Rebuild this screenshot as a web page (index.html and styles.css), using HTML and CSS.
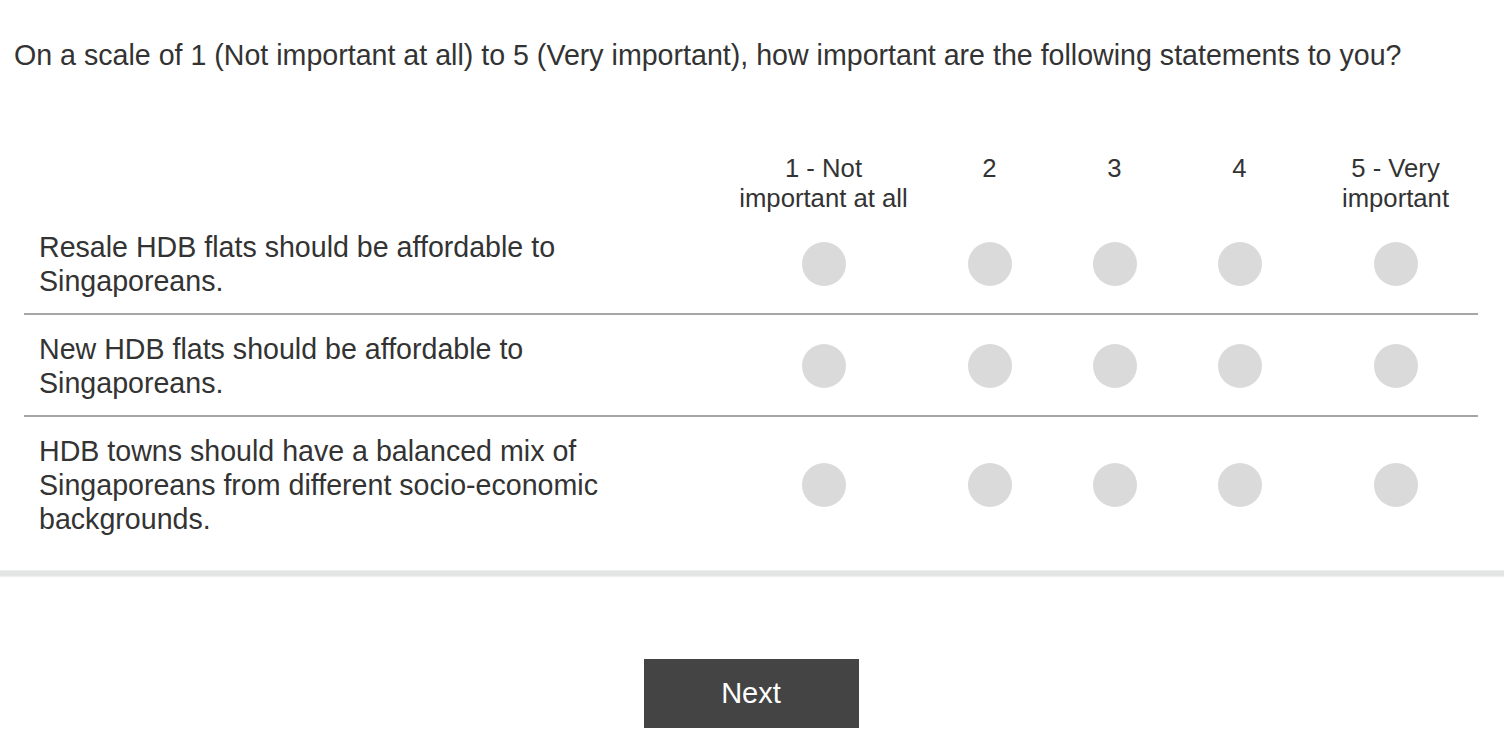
FILE: index.html
```html
<!DOCTYPE html>
<html>
<head>
<meta charset="utf-8">
<link rel="stylesheet" href="styles.css">
</head>
<body>
<div class="page">
  <div class="question">On a scale of 1 (Not important at all) to 5 (Very important), how important are the following statements to you?</div>
  <div class="matrix">
    <div class="row header">
      <div class="stmt"></div>
      <div class="col c1">1 - Not<br>important at all</div>
      <div class="col c2">2</div>
      <div class="col c3">3</div>
      <div class="col c4">4</div>
      <div class="col c5">5 - Very<br>important</div>
    </div>
    <div class="row item first sep">
      <div class="stmt">Resale HDB flats should be affordable to<br>Singaporeans.</div>
      <div class="col"><span class="radio"></span></div>
      <div class="col"><span class="radio"></span></div>
      <div class="col"><span class="radio"></span></div>
      <div class="col"><span class="radio"></span></div>
      <div class="col"><span class="radio"></span></div>
    </div>
    <div class="row item sep">
      <div class="stmt">New HDB flats should be affordable to<br>Singaporeans.</div>
      <div class="col"><span class="radio"></span></div>
      <div class="col"><span class="radio"></span></div>
      <div class="col"><span class="radio"></span></div>
      <div class="col"><span class="radio"></span></div>
      <div class="col"><span class="radio"></span></div>
    </div>
    <div class="row item">
      <div class="stmt">HDB towns should have a balanced mix of<br>Singaporeans from different socio-economic<br>backgrounds.</div>
      <div class="col"><span class="radio"></span></div>
      <div class="col"><span class="radio"></span></div>
      <div class="col"><span class="radio"></span></div>
      <div class="col"><span class="radio"></span></div>
      <div class="col"><span class="radio"></span></div>
    </div>
  </div>
  <div class="divider"></div>
  <div class="actions"><button class="next">Next</button></div>
</div>
</body>
</html>
```

FILE: styles.css
```css
html, body {
  margin: 0;
  padding: 0;
  background: #ffffff;
}
body {
  font-family: "Liberation Sans", Arial, sans-serif;
  color: #333333;
  overflow: hidden;
}
.page {
  width: 1504px;
}
.question {
  padding: 38px 0 0 14px;
  font-size: 28.6px;
  line-height: 34px;
  height: 112px;
  white-space: nowrap;
}
.matrix {
  margin-left: 24px;
  width: 1454px;
}
.row {
  display: grid;
  grid-template-columns: 696px 207px 125px 125px 125px 187px;
  align-items: center;
}
.header {
  height: 59px;
  padding-top: 3px;
  align-items: start;
}
.header .col {
  text-align: center;
  font-size: 25.7px;
  line-height: 30px;
}
.item {
  padding: 17px 0 15px;
}
.item.first {
  padding-top: 18px;
}
.sep {
  border-bottom: 2px solid #a6a6a6;
}
.stmt {
  padding-left: 15px;
  font-size: 28.6px;
  line-height: 34px;
  white-space: nowrap;
}
.col {
  display: flex;
  justify-content: center;
}
.radio {
  width: 44px;
  height: 44px;
  border-radius: 50%;
  background: #dadada;
  display: block;
}
.divider {
  margin-top: 19px;
  height: 5px;
  background: #e3e5e4;
  border-top: 1px solid #eeeeee;
  border-bottom: 1px solid #eeeeee;
}
.actions {
  display: flex;
  justify-content: center;
  padding-top: 82px;
}
.next {
  width: 215px;
  height: 69px;
  margin-right: 2px;
  background: #444444;
  color: #ffffff;
  border: 0;
  font-family: "Liberation Sans", Arial, sans-serif;
  font-size: 29px;
}
```
